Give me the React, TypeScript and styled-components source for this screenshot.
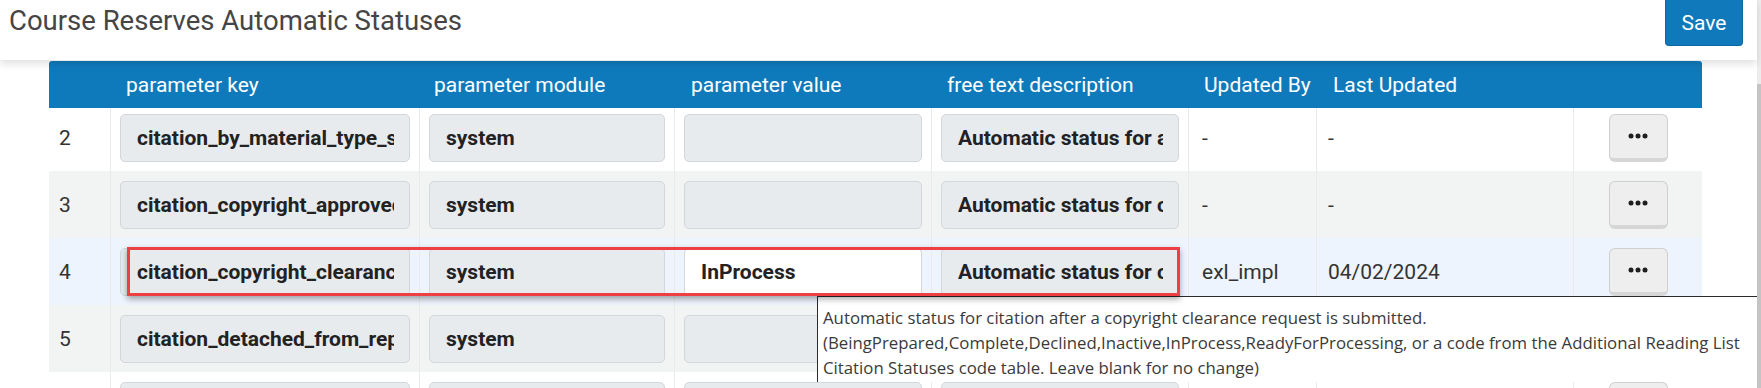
import * as React from "react";
import styled, { createGlobalStyle } from "styled-components";

const GlobalStyle = createGlobalStyle`
  html, body {
    margin: 0;
    padding: 0;
    background: #ffffff;
    font-family: Roboto, "Liberation Sans", Arial, sans-serif;
    overflow: hidden;
  }
`;

const Shell = styled.div`
  position: relative;
  display: flex;
  width: 1761px;
  height: 388px;
  overflow: hidden;
`;

const Main = styled.div`
  width: 1757px;
  display: flex;
  flex-direction: column;
`;

const ScrollTrack = styled.div`
  width: 4px;
  background: #ececec;
  display: flex;
  flex-direction: column;
`;

const ScrollThumb = styled.div`
  margin-top: 84px;
  height: 304px;
  background: #c4c4c4;
`;

const TopBar = styled.div`
  position: relative;
  z-index: 2;
  height: 62px;
  display: flex;
  justify-content: space-between;
  align-items: flex-start;
  padding: 0 14px 0 9px;
  background: #ffffff;
  box-shadow: 0 4px 8px rgba(0, 0, 0, 0.12);
`;

const Title = styled.h1`
  margin: 0;
  padding-top: 6px;
  font-size: 27.5px;
  line-height: 30px;
  font-weight: 400;
  color: #454545;
`;

const SaveButton = styled.button`
  width: 78px;
  height: 46px;
  border: 1px solid #0d67a1;
  border-top: none;
  border-radius: 0 0 4px 4px;
  background: #1079bc;
  color: #ffffff;
  font-family: Roboto, "Liberation Sans", Arial, sans-serif;
  font-size: 21px;
  padding: 0;
`;

const Table = styled.div`
  margin: 1px 0 0 49px;
  width: 1653px;
`;

const columns = "62px 309px 255px 257px 257px 128px 257px 128px";

const HeaderRow = styled.div`
  display: grid;
  grid-template-columns: ${columns};
  height: 47px;
  background: #0f7abb;
  border-radius: 3px 3px 0 0;
  position: relative;
  z-index: 1;
`;

const HeaderCell = styled.div<{ $pad?: number }>`
  display: flex;
  align-items: center;
  padding-left: ${(p) => p.$pad ?? 15}px;
  color: #ffffff;
  font-size: 21px;
  white-space: nowrap;
`;

const Body = styled.div`
  height: 280px;
  overflow: hidden;
`;

const BodyInner = styled.div`
  margin-top: -4px;
`;

const Row = styled.div<{ $tone: "white" | "gray" | "blue" }>`
  display: grid;
  grid-template-columns: ${columns};
  height: 67px;
  background: ${(p) =>
    p.$tone === "blue" ? "#edf4fd" : p.$tone === "gray" ? "#f2f3f3" : "#ffffff"};
`;

const Cell = styled.div<{ $pad?: number; $center?: boolean }>`
  display: flex;
  align-items: center;
  justify-content: ${(p) => (p.$center ? "center" : "flex-start")};
  padding: 0 ${(p) => p.$pad ?? 9}px;
  border-right: 1px solid #e9eaea;
  font-size: 21px;
  color: #333333;
  min-width: 0;
  &:last-child {
    border-right: none;
  }
`;

const Field = styled.input<{ $white?: boolean }>`
  width: 100%;
  height: 48px;
  box-sizing: border-box;
  border: 1px solid #d3d6da;
  border-radius: 5px;
  background: ${(p) => (p.$white ? "#ffffff" : "#e8ebee")};
  padding: 0 15px 0 16px;
  font-family: Roboto, "Liberation Sans", Arial, sans-serif;
  font-size: 21px;
  font-weight: 700;
  color: #222222;
  outline: none;
`;

const MoreButton = styled.button`
  width: 59px;
  height: 48px;
  box-sizing: border-box;
  border: 1px solid #cfcfcf;
  border-bottom: 4px solid #d6d6d6;
  border-radius: 6px;
  background: #eeeeee;
  display: flex;
  align-items: center;
  justify-content: center;
  padding: 0;
`;

const Highlight = styled.div`
  position: absolute;
  left: 127px;
  top: 247px;
  width: 1053px;
  height: 49px;
  box-sizing: border-box;
  border: 3px solid #ee3f42;
  box-shadow: 0 3px 6px rgba(0, 0, 0, 0.35);
  z-index: 4;
`;

const Tooltip = styled.div`
  position: absolute;
  left: 817px;
  top: 296px;
  width: 940px;
  height: 86px;
  box-sizing: border-box;
  background: #ffffff;
  border-top: 1px solid #2b2b2b;
  border-left: 1px solid #2b2b2b;
  padding: 8px 0 0 5px;
  font-family: "Open Sans", "Noto Sans", sans-serif;
  font-size: 16.8px;
  line-height: 25px;
  color: #3a3a3a;
  white-space: nowrap;
  z-index: 3;
`;

const Dots = () => (
  <svg width="20" height="6" viewBox="0 0 20 6">
    <circle cx="3" cy="3" r="2.5" fill="#1e1e1e" />
    <circle cx="10" cy="3" r="2.5" fill="#1e1e1e" />
    <circle cx="17" cy="3" r="2.5" fill="#1e1e1e" />
  </svg>
);

type Param = {
  n: number;
  key: string;
  module: string;
  value: string;
  desc: string;
  by: string;
  updated: string;
  tone: "white" | "gray" | "blue";
};

const rows: Param[] = [
  {
    n: 2,
    key: "citation_by_material_type_status",
    module: "system",
    value: "",
    desc: "Automatic status for a citation by material type",
    by: "-",
    updated: "-",
    tone: "white",
  },
  {
    n: 3,
    key: "citation_copyright_approved",
    module: "system",
    value: "",
    desc: "Automatic status for citation after copyright is approved",
    by: "-",
    updated: "-",
    tone: "gray",
  },
  {
    n: 4,
    key: "citation_copyright_clearance_requested",
    module: "system",
    value: "InProcess",
    desc: "Automatic status for citation after a copyright clearance request is submitted.",
    by: "exl_impl",
    updated: "04/02/2024",
    tone: "blue",
  },
  {
    n: 5,
    key: "citation_detached_from_repository",
    module: "system",
    value: "",
    desc: "Automatic status for citation detached from repository",
    by: "-",
    updated: "-",
    tone: "gray",
  },
];

export default function App() {
  return (
    <Shell>
      <GlobalStyle />
      <Main>
        <TopBar>
          <Title>Course Reserves Automatic Statuses</Title>
          <SaveButton>Save</SaveButton>
        </TopBar>
        <Table>
          <HeaderRow>
            <HeaderCell />
            <HeaderCell>parameter key</HeaderCell>
            <HeaderCell $pad={14}>parameter module</HeaderCell>
            <HeaderCell $pad={16}>parameter value</HeaderCell>
            <HeaderCell>free text description</HeaderCell>
            <HeaderCell>Updated By</HeaderCell>
            <HeaderCell $pad={16}>Last Updated</HeaderCell>
            <HeaderCell />
          </HeaderRow>
          <Body>
            <BodyInner>
              {rows.map((r) => (
                <Row key={r.n} $tone={r.tone}>
                  <Cell $pad={10}>{r.n}</Cell>
                  <Cell>
                    <Field readOnly value={r.key} />
                  </Cell>
                  <Cell>
                    <Field readOnly value={r.module} />
                  </Cell>
                  <Cell>
                    <Field readOnly value={r.value} $white={r.value !== ""} />
                  </Cell>
                  <Cell>
                    <Field readOnly value={r.desc} />
                  </Cell>
                  <Cell $pad={13}>{r.by}</Cell>
                  <Cell $pad={11}>{r.updated}</Cell>
                  <Cell $center>
                    <MoreButton>
                      <Dots />
                    </MoreButton>
                  </Cell>
                </Row>
              ))}
              {/* next row, only its top edge is in view */}
              <Row $tone="white">
                <Cell />
                <Cell>
                  <Field readOnly value="" />
                </Cell>
                <Cell>
                  <Field readOnly value="" />
                </Cell>
                <Cell>
                  <Field readOnly value="" />
                </Cell>
                <Cell>
                  <Field readOnly value="" />
                </Cell>
                <Cell />
                <Cell />
                <Cell $center>
                  <MoreButton />
                </Cell>
              </Row>
            </BodyInner>
          </Body>
        </Table>
      </Main>
      <ScrollTrack>
        <ScrollThumb />
      </ScrollTrack>
      <Highlight />
      <Tooltip>
        Automatic status for citation after a copyright clearance request is submitted.
        <br />
        (BeingPrepared,Complete,Declined,Inactive,InProcess,ReadyForProcessing, or a code from the Additional Reading List
        <br />
        Citation Statuses code table. Leave blank for no change)
      </Tooltip>
    </Shell>
  );
}
